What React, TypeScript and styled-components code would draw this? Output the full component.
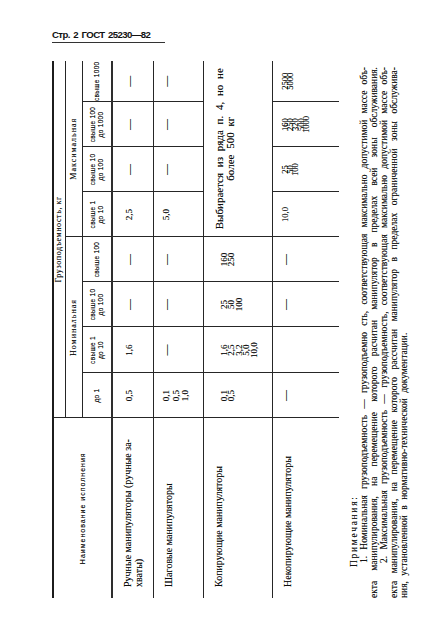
import React from "react";
import styled, { createGlobalStyle } from "styled-components";

const Global = createGlobalStyle`
  html, body { margin: 0; padding: 0; background: #fff; }
  body { font-family: "Liberation Serif", "Times New Roman", serif; color: #0e0e0e; }
`;

const Page = styled.div`
  width: 427px;
  height: 633px;
  box-sizing: border-box;
  padding: 29px 0 0 52px;
  overflow: hidden;
  background: #fff;
`;

const RunningHead = styled.header`
  width: 113px;
  padding-bottom: 1px;
  border-bottom: 1px solid #333;
  font-family: "Liberation Sans", Arial, sans-serif;
  font-weight: 700;
  font-size: 9.6px;
  line-height: 12px;
  letter-spacing: -0.6px;
  word-spacing: 1.5px;
  color: #111;
`;

const SheetFrame = styled.div`
  width: 360px;
  height: 537px;
  margin-top: 18px;
`;

const Sheet = styled.div`
  width: 537px;
  transform-origin: 0 0;
  transform: translateY(537px) rotate(-90deg);
  text-shadow: 0 0 0.3px rgba(0, 0, 0, 0.6);
`;

const Table = styled.table`
  width: 537px;
  table-layout: fixed;
  border-collapse: collapse;
  border-top: 2px solid #1c1c1c;
  color: #0e0e0e;
`;

const Row = styled.tr<{ $h: number }>`
  height: ${(p) => p.$h}px;
`;

type HeadKind = "name" | "total" | "group" | "range";

const headFont: Record<HeadKind, string> = {
  name: `font-family: "Liberation Sans", Arial, sans-serif; font-size: 7px; letter-spacing: 1px; line-height: 9px;`,
  total: `font-family: "Liberation Serif", "Times New Roman", serif; font-size: 8px; letter-spacing: 0.6px; line-height: 10px;`,
  group: `font-family: "Liberation Serif", "Times New Roman", serif; font-size: 8px; letter-spacing: 1px; line-height: 10px;`,
  range: `font-family: "Liberation Sans", Arial, sans-serif; font-size: 6.5px; letter-spacing: 0.3px; line-height: 8px;`,
};

const HeadCell = styled.th<{ $kind: HeadKind }>`
  padding: 0;
  font-weight: 400;
  text-align: center;
  vertical-align: middle;
  overflow: hidden;
  white-space: nowrap;
  border-left: ${(p) => (p.$kind === "name" ? "none" : "1px solid #262626")};
  border-bottom: ${(p) =>
    p.$kind === "name" || p.$kind === "range" ? "2px solid #2e2e2e" : "1px solid #262626"};
  ${(p) => headFont[p.$kind]}
`;

const NameCell = styled.td<{ $last?: boolean }>`
  padding: 9px 4px 0 11px;
  vertical-align: top;
  text-align: left;
  font-size: 10px;
  line-height: 11px;
  white-space: nowrap;
  border-bottom: ${(p) => (p.$last ? "none" : "1px solid #262626")};
`;

const ValueCell = styled.td<{ $pad: number; $last?: boolean }>`
  padding: ${(p) => p.$pad}px 0 0;
  vertical-align: top;
  text-align: center;
  border-left: 1px solid #262626;
  border-bottom: ${(p) => (p.$last ? "none" : "1px solid #262626")};
`;

const Values = styled.div<{ $fs: number; $lh: number }>`
  font-size: ${(p) => p.$fs}px;
  line-height: ${(p) => p.$lh}px;
`;

const Dash = styled.div<{ $lh: number }>`
  font-size: 11px;
  line-height: ${(p) => p.$lh}px;
`;

const ChoiceText = styled.div`
  padding-top: 10px;
  font-size: 11px;
  line-height: 11.5px;
  word-spacing: 3px;
  text-align: center;
  white-space: nowrap;
`;

const Notes = styled.div`
  width: 531px;
  margin-top: 10px;
  font-size: 9.5px;
  line-height: 10px;
  color: #141414;
`;

const NotesTitle = styled.div`
  padding-left: 31px;
  letter-spacing: 1.7px;
`;

const NoteLine = styled.div<{ $indent?: number; $last?: boolean }>`
  padding-left: ${(p) => p.$indent ?? 0}px;
  text-align: justify;
  text-align-last: ${(p) => (p.$last ? "left" : "justify")};
  word-spacing: ${(p) => (p.$last ? "3px" : "0")};
`;

type Cell = string[] | "dash" | "choice";

interface BodyRowData {
  name: string[];
  h: number;
  pad: number;
  fs: number;
  lh: number;
  cells: Cell[];
}

const cols = [180, 45, 46, 45, 45, 45, 45, 45, 41];

const rows: BodyRowData[] = [
  {
    name: ["Ручные манипуляторы (ручные за-", "хваты)"],
    h: 41,
    pad: 12,
    fs: 9,
    lh: 9,
    cells: [["0,5"], ["1,6"], "dash", "dash", ["2,5"], "dash", "dash", "dash"],
  },
  {
    name: ["Шаговые манипуляторы"],
    h: 50,
    pad: 8.5,
    fs: 9,
    lh: 9.5,
    cells: [["0,1", "0,5", "1,0"], "dash", "dash", "dash", ["5,0"], "dash", "dash", "dash"],
  },
  {
    name: ["Копирующие манипуляторы"],
    h: 69,
    pad: 17,
    fs: 9,
    lh: 7.6,
    cells: [
      ["0,1", "0,5"],
      ["1,6", "2,5", "3,2", "5,0", "10,0"],
      ["25", "50", "100"],
      ["160", "250"],
      "choice",
    ],
  },
  {
    name: ["Некопирующие манипуляторы"],
    h: 67,
    pad: 10.5,
    fs: 8.5,
    lh: 5.2,
    cells: [
      "dash",
      [],
      "dash",
      "dash",
      ["10,0"],
      ["25", "50", "100"],
      ["160", "250", "320", "500", "1000"],
      ["2500", "5000"],
    ],
  },
];

const ranges = [
  ["до 1"],
  ["свыше 1", "до 10"],
  ["свыше 10", "до 100"],
  ["свыше 100"],
  ["свыше 1", "до 10"],
  ["свыше 10", "до 100"],
  ["свыше 100", "до 1000"],
  ["свыше 1000"],
];

function Lines({ lines }: { lines: string[] }) {
  return (
    <>
      {lines.map((l, i) => (
        <div key={i}>{l}</div>
      ))}
    </>
  );
}

export default function App() {
  return (
    <>
      <Global />
      <Page>
        <RunningHead>Стр. 2 ГОСТ 25230—82</RunningHead>
        <SheetFrame>
          <Sheet>
            <Table>
              <colgroup>
                {cols.map((w, i) => (
                  <col key={i} style={{ width: w }} />
                ))}
              </colgroup>
              <thead>
                <Row $h={12}>
                  <HeadCell $kind="name" rowSpan={3}>
                    Наименование исполнения
                  </HeadCell>
                  <HeadCell $kind="total" colSpan={8}>
                    Грузоподъемность, кг
                  </HeadCell>
                </Row>
                <Row $h={17}>
                  <HeadCell $kind="group" colSpan={4}>
                    Номинальная
                  </HeadCell>
                  <HeadCell $kind="group" colSpan={4}>
                    Максимальная
                  </HeadCell>
                </Row>
                <Row $h={30}>
                  {ranges.map((r, i) => (
                    <HeadCell key={i} $kind="range">
                      <Lines lines={r} />
                    </HeadCell>
                  ))}
                </Row>
              </thead>
              <tbody>
                {rows.map((row, ri) => {
                  const last = ri === rows.length - 1;
                  return (
                    <Row key={ri} $h={row.h}>
                      <NameCell $last={last}>
                        <Lines lines={row.name} />
                      </NameCell>
                      {row.cells.map((c, ci) => {
                        if (c === "choice") {
                          return (
                            <ValueCell key={ci} $pad={0} $last={last} colSpan={4}>
                              <ChoiceText>
                                Выбирается из ряда п. 4, но не
                                <br />
                                более 500 кг
                              </ChoiceText>
                            </ValueCell>
                          );
                        }
                        return (
                          <ValueCell key={ci} $pad={row.pad} $last={last}>
                            {c === "dash" ? (
                              <Dash $lh={row.lh}>—</Dash>
                            ) : (
                              <Values $fs={row.fs} $lh={row.lh}>
                                <Lines lines={c} />
                              </Values>
                            )}
                          </ValueCell>
                        );
                      })}
                    </Row>
                  );
                })}
              </tbody>
            </Table>
            <Notes>
              <NotesTitle>Примечания:</NotesTitle>
              <NoteLine $indent={35}>
                1. Номинальная грузоподъемность — грузоподъемно сть, соответствующая максимально допустимой массе объ-
              </NoteLine>
              <NoteLine>
                екта манипулирования, на перемещение которого расчитан манипулятор в пределах всей зоны обслуживания.
              </NoteLine>
              <NoteLine $indent={35}>
                2. Максимальная грузоподъемность — грузоподъемность, соответствующая максимально допустимой массе объ-
              </NoteLine>
              <NoteLine>
                екта манипулирования, на перемещение которого рассчитан манипулятор в пределах ограниченной зоны обслужива-
              </NoteLine>
              <NoteLine $last>ния, установленной в нормативно-технической документации.</NoteLine>
            </Notes>
          </Sheet>
        </SheetFrame>
      </Page>
    </>
  );
}
